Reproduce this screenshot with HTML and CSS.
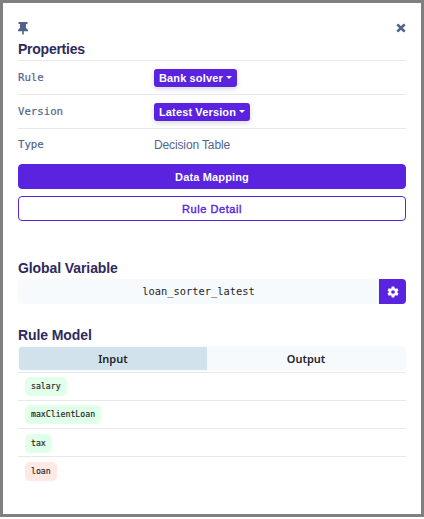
FILE: index.html
```html
<!DOCTYPE html>
<html lang="en">
<head>
<meta charset="utf-8">
<title>Properties</title>
<link rel="stylesheet" href="styles.css">
</head>
<body>
<main class="panel">
  <header class="toolbar">
    <svg class="pin" viewBox="0 0 10 13"><path d="M.5 0h9v2H8v4l2 2v1.300H5.800V12L5 13l-.8-1V9.300H0V8l2-2V2H.5z"/></svg>
    <svg class="close" viewBox="0 0 10 10"><path d="M1.300 1.300l7.400 7.400M8.700 1.300l-7.400 7.400"/></svg>
  </header>
  <h2 class="title properties-title">Properties</h2>
  <dl class="properties">
    <div class="property"><dt>Rule</dt><dd><button class="dropdown">Bank solver<i class="caret"></i></button></dd></div>
    <div class="property"><dt>Version</dt><dd><button class="dropdown">Latest Version<i class="caret"></i></button></dd></div>
    <div class="property"><dt>Type</dt><dd>Decision Table</dd></div>
  </dl>
  <button class="action primary">Data Mapping</button>
  <button class="action outline">Rule Detail</button>
  <h2 class="title variable-title">Global Variable</h2>
  <div class="variable">
    <span class="variable-name">loan_sorter_latest</span>
    <button class="settings" aria-label="Settings"><svg viewBox="0 0 24 24"><path fill-rule="evenodd" d="M9.500 1h5l.8 3.300 2 1.150 3.250-.95 2.500 4.300L20.600 11.200v1.700l2.450 2.300-2.500 4.300-3.250-.95-2 1.150-.8 3.300h-5l-.8-3.300-2-1.150-3.250.95-2.500-4.300L3.400 12.900v-1.700L.95 8.800l2.500-4.300 3.250.95 2-1.150zM12 8.300a3.700 3.700 0 1 0 0 7.400 3.700 3.700 0 0 0 0-7.400z"/></svg></button>
  </div>
  <h2 class="title model-title">Rule Model</h2>
  <div class="tabs"><button class="tab active">Input</button><button class="tab">Output</button></div>
  <ul class="fields">
    <li><span class="badge">salary</span></li>
    <li><span class="badge">maxClientLoan</span></li>
    <li><span class="badge">tax</span></li>
    <li><span class="badge missing">loan</span></li>
  </ul>
</main>
</body>
</html>
```
FILE: styles.css
```css
* { box-sizing: border-box; }
body { margin: 0; background: #fff; font-family: "Liberation Sans", Arial, sans-serif; color: #212529; }
button { font: inherit; border: 0; padding: 0; }
.panel { height: 517px; border: 3px solid #808080; padding: 19px 15px 0; }
.toolbar { display: flex; justify-content: space-between; height: 17px; }
.pin { display: block; width: 10px; height: 13px; fill: #50618a; }
.close { width: 10px; height: 10px; margin-top: 1px; stroke: #50618a; stroke-width: 2.6; }
.title { margin: 0; height: 21px; font-size: 14px; line-height: 20px; font-weight: 700; color: #2e2a5c; letter-spacing: -.09px; }
.properties-title { letter-spacing: -.25px; }
.properties { margin: 0; border-top: 1px solid #e6e8ec; }
.property { display: flex; align-items: center; height: 34px; border-bottom: 1px solid #e6e8ec; font-size: 12px; color: #506690; }
.property:last-child { border-bottom: 0; padding-bottom: 2px; }
.property:last-child dd { letter-spacing: -.13px; }
dt { width: 136px; padding-bottom: 1px; font: 10.700px "DejaVu Sans Mono", monospace; -webkit-text-stroke: .2px #506690; }
dd { margin: 0; }
.dropdown { display: flex; align-items: center; height: 18px; padding: 0 5px; border-radius: 3px; background: #5a23e0; color: #fff; font-size: 11px; font-weight: 700; letter-spacing: .13px; box-shadow: 0 2px 5px rgba(60, 50, 100, .2); }
.caret { margin-left: 3px; border: 3px solid transparent; border-top-color: #fff; border-bottom: 0; }
.action { display: block; width: 100%; height: 25px; border-radius: 4px; border: 1px solid #5a23e0; font-size: 11px; font-weight: 700; }
.primary { background: #5a23e0; color: #fff; margin-top: 1px; letter-spacing: .15px; }
.outline { margin-top: 7px; background: #fff; color: #5a23e0; font-weight: 400; letter-spacing: .55px; -webkit-text-stroke: .4px #5a23e0; }
.variable-title { margin-top: 37px; }
.variable { display: flex; height: 25px; background: #f6fafd; border-radius: 4px; overflow: hidden; }
.variable-name { flex: 1; text-align: center; font: 10.400px/25px "DejaVu Sans Mono", monospace; }
.settings { display: flex; width: 27px; align-items: center; justify-content: center; background: #5a23e0; }
.settings svg { width: 12px; height: 12px; fill: #fff; }
.model-title { margin-top: 21px; }
.tabs { display: grid; grid-template-columns: 188px 1fr; height: 25px; padding: 1px; background: #f6fafd; border-radius: 4px; }
.tab { background: none; font: 600 11px "Noto Sans", sans-serif; color: #212529; }
.active { background: #d2e2ed; border-radius: 3px 0 0 3px; }
.fields { list-style: none; margin: 1px 0 0; padding: 0; }
.fields li { display: flex; align-items: center; height: 28px; padding-left: 7px; border-top: 1px solid #e6e8ec; }
.fields li:nth-child(n+3) { padding-top: 2px; }
.badge { height: 19px; padding: 0 6px; border-radius: 5px; background: #e2ffe9; font: 8.200px/19px "DejaVu Sans Mono", monospace; -webkit-text-stroke: .15px #212529; }
.missing { background: #ffe9e4; }
```
